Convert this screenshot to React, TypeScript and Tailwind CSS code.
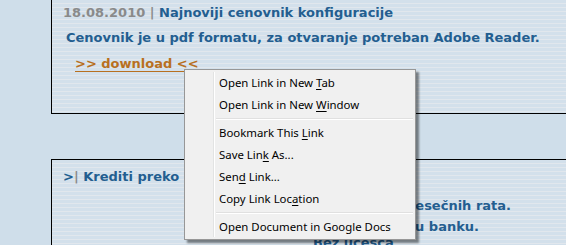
import React from "react";

const stripes =
  "bg-[repeating-linear-gradient(to_bottom,#d3e0eb_0px,#d3e0eb_3px,#e1e7ed_3px,#e1e7ed_4px)]";

function U({ children }: { children: React.ReactNode }) {
  return <span className="underline underline-offset-[2px]">{children}</span>;
}

function Item({ children }: { children: React.ReactNode }) {
  return (
    <div className="h-[22px] flex items-center pl-[34px] text-[11.4px] text-black">
      <span className="whitespace-pre">{children}</span>
    </div>
  );
}

function Sep() {
  return (
    <div className="h-[6px] flex items-center pl-[31px] pr-[2px]">
      <div className="w-full border-t border-[#e0e0e0] border-b border-b-white" />
    </div>
  );
}

export default function App() {
  return (
    <div
      className="relative w-[566px] h-[245px] overflow-hidden bg-[#cfdeea]"
      style={{ fontFamily: '"DejaVu Sans", Verdana, sans-serif' }}
    >
      {/* Box 1 */}
      <div
        className={`ml-[51px] w-[600px] h-[114px] border-l border-b border-black ${stripes} font-bold text-[13px]`}
      >
        <div className="h-[25px] leading-[25px] pl-[11px]">
          <span className="text-[#8a8a8a]">18.08.2010 | </span>
          <span className="text-[#235e90]">Najnoviji cenovnik konfiguracije</span>
        </div>
        <div className="h-[26px] leading-[26px] pl-[14px] text-[#235e90]">
          Cenovnik je u pdf formatu, za otvaranje potreban Adobe Reader.
        </div>
        <div className="h-[26px] leading-[26px] pl-[23px]">
          <span className="text-[#b8701f] underline underline-offset-[3px]">
            &gt;&gt; download &lt;&lt;
          </span>
        </div>
      </div>

      {/* Box 2 */}
      <div
        className={`mt-[45px] ml-[51px] w-[600px] h-[200px] border-l border-t border-black ${stripes} font-bold text-[13px] text-[#235e90]`}
      >
        <div className="h-[26px] leading-[26px] mt-[4px] pl-[11px]">
          <span>&gt;</span>
          <span className="text-[#8a8a8a]">| </span>
          <span>Krediti preko kartica</span>
        </div>
        <div className="mt-[5px] h-[21px] leading-[21px] w-[459px] text-right whitespace-nowrap">
          Do 12 mesečnih rata.
        </div>
        <div className="h-[21px] leading-[21px] w-[427px] text-right whitespace-nowrap">
          Bez odlaska u banku.
        </div>
        <div className="h-[12px] leading-[12px] pl-[261px] whitespace-nowrap">
          Bez učešća
        </div>
      </div>

      {/* Context menu */}
      <div
        className="absolute left-[184px] top-[69px] w-[232px] bg-[#f0f0f0] border border-[#979797] pt-[2px] pb-[1px] shadow-[3px_3px_2px_rgba(0,0,0,0.45)]"
        style={{ fontFamily: '"Noto Sans", "Open Sans", sans-serif' }}
      >
        <div className="absolute left-[28px] top-[2px] bottom-[2px] w-[2px] border-l border-[#e2e3e3] border-r border-r-white" />
        <div className="relative">
          <Item>
            Open Link in New <U>T</U>ab
          </Item>
          <Item>
            Open Link in New <U>W</U>indow
          </Item>
          <Sep />
          <Item>
            Bookmark This <U>L</U>ink
          </Item>
          <Item>
            Save Lin<U>k</U> As...
          </Item>
          <Item>
            Sen<U>d</U> Link...
          </Item>
          <Item>
            Copy Link Loc<U>a</U>tion
          </Item>
          <Sep />
          <Item>Open Document in Google Docs</Item>
        </div>
      </div>
    </div>
  );
}
